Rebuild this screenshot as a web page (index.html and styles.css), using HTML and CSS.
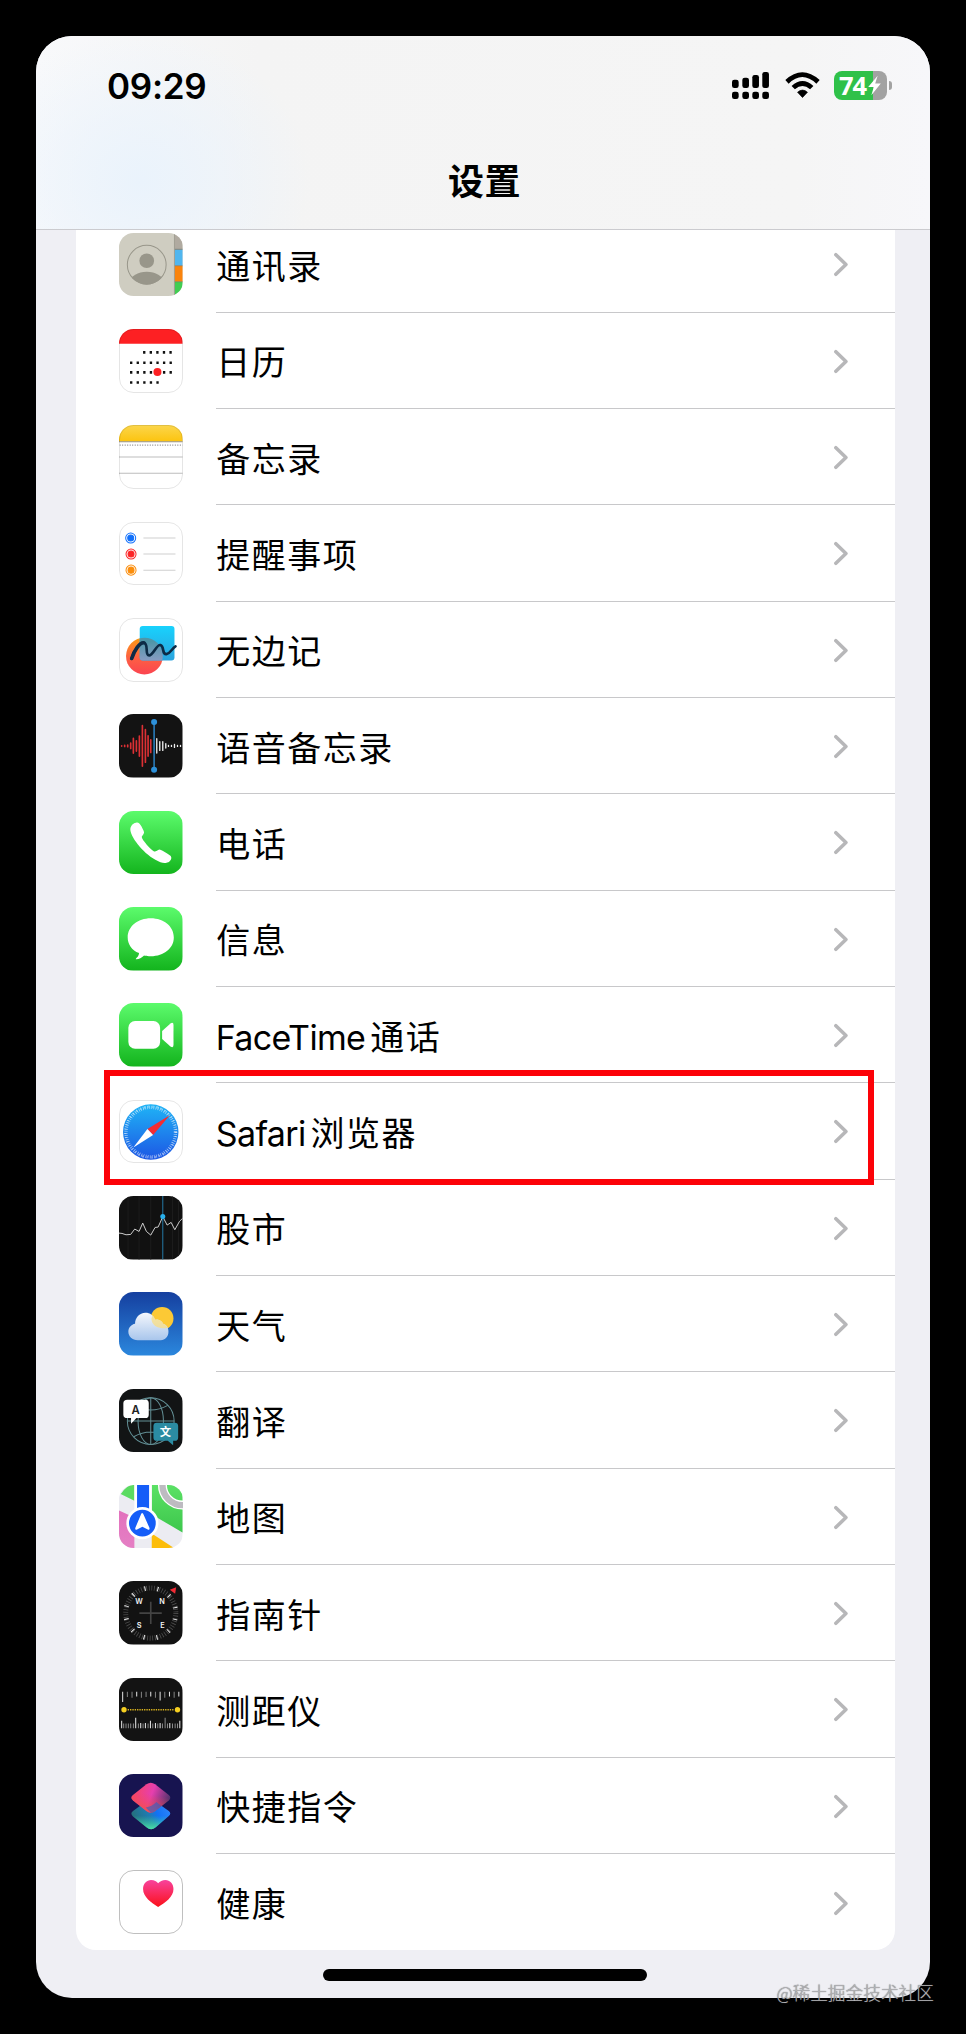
FILE: index.html
```html
<!DOCTYPE html>
<html lang="zh-CN">
<head>
<meta charset="utf-8">
<title>设置</title>
<link rel="stylesheet" href="styles.css">
</head>
<body>
<svg class="defs" width="0" height="0" aria-hidden="true">
  <defs>
    <linearGradient id="green" x1="0" y1="0" x2="0" y2="1"><stop offset="0" stop-color="#5cfb6c"/><stop offset="1" stop-color="#13b41d"/></linearGradient>
    <linearGradient id="yellow" x1="0" y1="0" x2="0" y2="1"><stop offset="0" stop-color="#fbd64d"/><stop offset="1" stop-color="#fcc40f"/></linearGradient>
    <linearGradient id="cyan" x1="0" y1="0" x2="0" y2="1"><stop offset="0" stop-color="#18d2fd"/><stop offset="1" stop-color="#2ba4de"/></linearGradient>
    <linearGradient id="coral" x1="0" y1="0" x2="0" y2="1"><stop offset="0" stop-color="#fb9b14"/><stop offset=".55" stop-color="#fd6043"/><stop offset="1" stop-color="#fb4450"/></linearGradient>
    <linearGradient id="overlap" x1="0" y1="0" x2="0" y2="1"><stop offset=".1" stop-color="#4f96a8"/><stop offset=".65" stop-color="#8a9cc4"/></linearGradient>
    <linearGradient id="safari" x1="0" y1="0" x2="0" y2="1"><stop offset="0" stop-color="#1fb4f6"/><stop offset="1" stop-color="#1d56e4"/></linearGradient>
    <linearGradient id="sky" x1="0" y1="0" x2="0" y2="1"><stop offset="0" stop-color="#153f9f"/><stop offset="1" stop-color="#2b87dd"/></linearGradient>
    <linearGradient id="cloud" x1="0" y1="0" x2="0" y2="1"><stop offset="0" stop-color="#f4f7fc"/><stop offset="1" stop-color="#a9c6ec"/></linearGradient>
    <linearGradient id="heart" x1="0" y1="0" x2="0" y2="1"><stop offset="0" stop-color="#f8429c"/><stop offset="1" stop-color="#fb1019"/></linearGradient>
    <linearGradient id="scTop" x1="0" y1=".3" x2="1" y2=".6"><stop offset="0" stop-color="#fa4560"/><stop offset=".5" stop-color="#e63fae"/><stop offset="1" stop-color="#4a3268"/></linearGradient>
    <linearGradient id="scShade" x1=".7" y1="0" x2=".4" y2="1"><stop offset=".4" stop-color="#f24a50" stop-opacity="0"/><stop offset="1" stop-color="#f65048"/></linearGradient>
    <linearGradient id="scLow" x1="0" y1=".6" x2="1" y2=".3"><stop offset="0" stop-color="#256f78"/><stop offset=".45" stop-color="#1f7cb4"/><stop offset=".65" stop-color="#1272f5"/><stop offset="1" stop-color="#2d85fb"/></linearGradient>
    <linearGradient id="scGlow" x1=".5" y1="0" x2=".5" y2="1"><stop offset=".55" stop-color="#3ad0a0" stop-opacity="0"/><stop offset="1" stop-color="#4be0a4"/></linearGradient>
    <linearGradient id="pink" x1="0" y1="0" x2="0" y2="1"><stop offset="0" stop-color="#e271bd"/><stop offset="1" stop-color="#e57fc4"/></linearGradient>
    <linearGradient id="mapGreen" x1="0" y1="0" x2="0" y2="1"><stop offset="0" stop-color="#5be165"/><stop offset="1" stop-color="#3dc74c"/></linearGradient>
    <symbol id="chevron" viewBox="0 0 15 25"><path d="M2 2 12.8 12.5 2 23" fill="none" stroke="#b7b7b9" stroke-width="3.8" stroke-linecap="round" stroke-linejoin="round"/></symbol>
  </defs>
</svg>

<div class="phone">
  <header class="header">
    <div class="status">
      <span class="time">09:29</span>
      <div class="indicators">
        <svg class="signal" viewBox="0 0 112 82">
          <rect x="0" y="23" width="20" height="25" rx="7"/><rect x="31" y="17" width="20" height="31" rx="7"/><rect x="61" y="9" width="20" height="39" rx="7"/><rect x="91" y="0" width="20" height="48" rx="7"/>
          <rect x="0" y="59" width="20" height="22" rx="7"/><rect x="31" y="59" width="20" height="22" rx="7"/><rect x="61" y="59" width="20" height="22" rx="7"/><rect x="91" y="59" width="20" height="22" rx="7"/>
        </svg>
        <svg class="wifi" viewBox="0 0 106 80">
          <path d="M1 24Q52-23 105 24L95 35Q52-5 11 35Z"/><path d="M20 42Q53 12 86 42L76 52Q53 32 30 52Z"/><path d="M38 61Q53 48 68 61L53 77Z" stroke="#000" stroke-width="2" stroke-linejoin="round"/>
        </svg>
        <div class="battery">
          <span class="charge">74</span>
          <svg class="bolt" viewBox="0 0 36 60"><path d="M27 2 0 34H16L9 58 36 24H20Z"/></svg>
        </div>
        <i class="nub"></i>
      </div>
    </div>
    <h1 class="title">设置</h1>
  </header>

  <main class="content">
    <ul class="list">
      <li class="row">
        <svg class="icon" viewBox="0 0 190 190"><rect width="190" height="190" fill="#cfcdc1"/><path d="M167 0h23v49h-23z" fill="#b0aaa0"/><path d="M167 49h23v49h-23z" fill="#51b6ef"/><path d="M167 98h23v48h-23z" fill="#fb840e"/><path d="M167 146h23v44h-23z" fill="#41cd52"/><path d="M167 49h23M167 98h23M167 146h23" stroke="#75736a" stroke-width="3" opacity=".6"/><path d="M166 0v190" stroke="#8d8b80" stroke-width="2"/><clipPath id="face"><circle cx="83" cy="95" r="59"/></clipPath><circle cx="83" cy="83" r="22" fill="#98968a"/><ellipse cx="83" cy="146" rx="49" ry="30" fill="#98968a" clip-path="url(#face)"/><circle cx="83" cy="95" r="58" fill="none" stroke="#98968a" stroke-width="3"/></svg>
        <div class="cell"><span class="label">通讯录</span><svg class="chevron"><use href="#chevron"/></svg></div>
      </li>
      <li class="row">
        <svg class="icon outlined" viewBox="0 0 190 190"><rect width="190" height="190" fill="#fff"/><path d="M0 0h190v44H0z" fill="#fd2023"/><g stroke="#111" stroke-width="8" fill="none"><path d="M72 70h90" stroke-dasharray="7 12.7"/><path d="M33 101h128" stroke-dasharray="7 12.7"/><path d="M33 130h128" stroke-dasharray="7 12.7"/><path d="M33 160h89" stroke-dasharray="7 12.7"/></g><circle cx="115" cy="129" r="12" fill="#fd2023"/></svg>
        <div class="cell"><span class="label">日历</span><svg class="chevron"><use href="#chevron"/></svg></div>
      </li>
      <li class="row">
        <svg class="icon outlined" viewBox="0 0 190 190"><rect width="190" height="190" fill="#fff"/><path d="M0 0h190v49H0z" fill="url(#yellow)"/><path d="M0 50h190" stroke="#96917f" stroke-width="3"/><path d="M2 60h188" stroke="#888" stroke-width="4" stroke-dasharray="3 4.5"/><path d="M0 96h190M0 144h190" stroke="#bdbdbd" stroke-width="3"/></svg>
        <div class="cell"><span class="label">备忘录</span><svg class="chevron"><use href="#chevron"/></svg></div>
      </li>
      <li class="row">
        <svg class="icon outlined" viewBox="0 0 190 190"><rect width="190" height="190" fill="#fff"/><g stroke-width="3"><g fill="#1170fb" stroke="#1170fb"><circle cx="35" cy="48" r="9"/><circle cx="35" cy="48" r="15" fill="none"/></g><g fill="#fb2527" stroke="#fb2527"><circle cx="36" cy="96" r="9"/><circle cx="36" cy="96" r="15" fill="none"/></g><g fill="#fb8d0b" stroke="#fb8d0b"><circle cx="36" cy="144" r="9"/><circle cx="36" cy="144" r="15" fill="none"/></g></g><path d="M73 48h96M73 96h96M73 144h96" stroke="#cfcfcf" stroke-width="3"/></svg>
        <div class="cell"><span class="label">提醒事项</span><svg class="chevron"><use href="#chevron"/></svg></div>
      </li>
      <li class="row">
        <svg class="icon outlined" viewBox="0 0 190 190"><rect width="190" height="190" fill="#fff"/><circle cx="76" cy="114" r="55" fill="url(#coral)"/><rect x="62" y="24" width="104" height="103" rx="9" fill="url(#cyan)"/><clipPath id="card"><rect x="62" y="24" width="104" height="103" rx="9"/></clipPath><circle cx="76" cy="114" r="55" fill="url(#overlap)" clip-path="url(#card)"/><path d="M38 121C46 96 62 73 74 74 90 75 76 112 90 112 103 112 112 78 124 81 137 85 127 110 142 108 155 106 158 91 169 85" fill="none" stroke="#0d2b46" stroke-width="8" stroke-linecap="round"/><path d="M38 121C46 96 62 73 74 74" fill="none" stroke="#0d2b46" stroke-width="11" stroke-linecap="round"/></svg>
        <div class="cell"><span class="label">无边记</span><svg class="chevron"><use href="#chevron"/></svg></div>
      </li>
      <li class="row">
        <svg class="icon" viewBox="0 0 190 190"><rect width="190" height="190" fill="#131313"/><g stroke="#dc3034" stroke-width="5" stroke-linecap="round"><path d="M8 95v1M17 94v3M26 93v5M35 87v16M43 73v44M52 80v31M61 66v60M70 35v121M79 47v97M87 65v61M95 77v38"/></g><g stroke="#eee" stroke-width="4" stroke-linecap="round"><path d="M113 74v43M122 83v26M131 83v26M140 89v13M148 94v3M157 94v3M166 91v9M175 94v3M184 94v3"/></g><path d="M105 24v143" stroke="#2d91da" stroke-width="4"/><circle cx="105" cy="24" r="9" fill="#2d91da"/><circle cx="105" cy="167" r="9" fill="#2d91da"/></svg>
        <div class="cell"><span class="label">语音备忘录</span><svg class="chevron"><use href="#chevron"/></svg></div>
      </li>
      <li class="row">
        <svg class="icon" viewBox="0 0 190 190"><rect width="190" height="190" fill="url(#green)"/><path d="M51 35C58 33 62 38 67 46L74 60C77 67 72 71 68 77 68 86 96 117 105 121 110 123 115 116 121 115 126 115 147 128 154 134 159 139 156 147 151 151 144 156 134 157 124 153 84 138 43 91 35 62 31 47 40 37 51 35Z" fill="#fff"/></svg>
        <div class="cell"><span class="label">电话</span><svg class="chevron"><use href="#chevron"/></svg></div>
      </li>
      <li class="row">
        <svg class="icon" viewBox="0 0 190 190"><rect width="190" height="190" fill="url(#green)"/><path d="M95 34C135 34 164 59 164 91S135 147 95 147C88 147 81 147 75 145 68 152 60 156 52 156 48 156 52 153 57 147 59 144 60 141 60 138 38 129 26 111 26 91 26 59 56 34 95 34Z" fill="#fff"/></svg>
        <div class="cell"><span class="label">信息</span><svg class="chevron"><use href="#chevron"/></svg></div>
      </li>
      <li class="row">
        <svg class="icon" viewBox="0 0 190 190"><rect width="190" height="190" fill="url(#green)"/><rect x="28" y="54" width="95" height="83" rx="20" fill="#fff"/><path d="M129 84 154 61Q163 55 163 66V126Q163 136 154 130L129 108Z" fill="#fff"/></svg>
        <div class="cell"><span class="label"><span class="latin">FaceTime</span>通话</span><svg class="chevron"><use href="#chevron"/></svg></div>
      </li>
      <li class="row">
        <svg class="icon outlined" viewBox="0 0 190 190"><rect width="190" height="190" fill="#fff"/><circle cx="95" cy="96" r="83" fill="url(#safari)"/><circle cx="95" cy="96" r="74" fill="none" stroke="#fff" stroke-width="10" stroke-dasharray="2 4.46" opacity=".65"/><circle cx="95" cy="96" r="76" fill="none" stroke="#fff" stroke-width="7" stroke-dasharray="2 10.92" opacity=".6"/><path d="M152 46 85 87 102 105Z" fill="#f42c32"/><path d="M43 142 85 87 102 105Z" fill="#fff"/></svg>
        <div class="cell"><span class="label"><span class="latin">Safari</span>浏览器</span><svg class="chevron"><use href="#chevron"/></svg></div>
        <div class="highlight"></div>
      </li>
      <li class="row">
        <svg class="icon" viewBox="0 0 190 190"><rect width="190" height="190" fill="#111"/><path d="M27 0v190M60 0v190M95 0v190M160 0v190M178 0v190" stroke="#1c1c1c" stroke-width="3"/><path d="M0 111 9 112 21 116 35 115 47 99 60 106 71 81 82 106 95 117 108 94 117 93 131 62 144 87 156 79 167 101 181 76 190 67" fill="none" stroke="#d8d8d8" stroke-width="2.8"/><path d="M131 0v190" stroke="#2479a6" stroke-width="3"/><circle cx="131" cy="61" r="7.5" fill="#28b0ec"/></svg>
        <div class="cell"><span class="label">股市</span><svg class="chevron"><use href="#chevron"/></svg></div>
      </li>
      <li class="row">
        <svg class="icon" viewBox="0 0 190 190"><rect width="190" height="190" fill="url(#sky)"/><circle cx="129" cy="79" r="34" fill="#fcc935"/><path d="M56 144C40 144 28 133 28 119 28 106 37 97 48 95 48 77 61 62 79 62 93 62 104 70 108 83 119 80 130 88 133 96 143 98 148 108 148 119 148 134 138 144 125 144Z" fill="url(#cloud)"/><path d="M100 70C106 76 107 80 108 83 119 80 130 88 133 96 138 98 142 101 144 107 120 113 98 101 97 80Z" fill="#f8dd83" opacity=".75"/></svg>
        <div class="cell"><span class="label">天气</span><svg class="chevron"><use href="#chevron"/></svg></div>
      </li>
      <li class="row">
        <svg class="icon" viewBox="0 0 190 190"><rect width="190" height="190" fill="#121415"/><g fill="none" stroke="#639096" stroke-width="3"><circle cx="95" cy="96" r="70"/><ellipse cx="95" cy="96" rx="38" ry="70"/><path d="M95 26v140M25 96h140M44 49Q95 77 146 49M44 143Q95 115 146 143" /></g><path d="M25 32H79Q89 32 89 42V77Q89 87 79 87H52L36 104V87H25Q13 87 13 77V43Q13 32 25 32Z" fill="#fff"/><path d="M113 101H167Q177 101 177 111V145Q177 155 167 155H162V168L146 155H113Q103 155 103 145V111Q103 101 113 101Z" fill="#2b8ba2"/><text x="50" y="74" class="glyph-a">A</text><text x="139" y="140" class="glyph-wen">文</text></svg>
        <div class="cell"><span class="label">翻译</span><svg class="chevron"><use href="#chevron"/></svg></div>
      </li>
      <li class="row">
        <svg class="icon" viewBox="0 0 190 190"><rect width="190" height="190" fill="#ececf2"/><path d="M8 24Q24 0 42 0H46V47L5 27Z" fill="#5bdb61"/><path d="M98 0H190V142L98 88Z" fill="url(#mapGreen)"/><path d="M0 76 46 97V190H0Z" fill="url(#pink)"/><path d="M98 145 167 190H98Z" fill="#fcbd0b"/><circle cx="190" cy="0" r="60" fill="none" stroke="#fff" stroke-width="27"/><circle cx="190" cy="0" r="60" fill="none" stroke="#bdbbc1" stroke-width="19"/><path d="M46 0H98V93H46Z" fill="#fff"/><path d="M54 0H90V90H54Z" fill="#155df8"/><circle cx="70" cy="114" r="48" fill="#fff"/><circle cx="70" cy="114" r="40" fill="#155df8"/><path d="M69 84Q72 84 74 90L91 128Q93 136 86 133L70 125 54 133Q47 136 49 128L65 90Q67 84 69 84Z" fill="#fff"/></svg>
        <div class="cell"><span class="label">地图</span><svg class="chevron"><use href="#chevron"/></svg></div>
      </li>
      <li class="row">
        <svg class="icon" viewBox="0 0 190 190"><rect width="190" height="190" fill="#121212"/><circle cx="95" cy="96" r="75" fill="none" stroke="#4c4c4c" stroke-width="15" stroke-dasharray="2.5 5.35"/><circle cx="95" cy="96" r="75" fill="none" stroke="#e8e8e8" stroke-width="14" stroke-dasharray="3 36.27" stroke-dashoffset="-18"/><path d="M95 62v67M61 96h67" stroke="#444" stroke-width="5"/><path d="M152 26 171 19 168 38Z" fill="#f12b34"/><g class="compass-letters"><text x="60" y="68">W</text><text x="129" y="68">N</text><text x="60" y="140">S</text><text x="130" y="140">E</text></g></svg>
        <div class="cell"><span class="label">指南针</span><svg class="chevron"><use href="#chevron"/></svg></div>
      </li>
      <li class="row">
        <svg class="icon" viewBox="0 0 190 190"><rect width="190" height="190" fill="#131313"/><g fill="none" stroke-width="3"><path d="M11 41v31M53 41v14M95 41v14M123 41v26M151 41v14M179 41v14" stroke="#e8e8e8"/><path d="M25 41v16M39 41v18M67 41v18M81 41v16M109 41v18M137 41v18M165 41v18" stroke="#858585"/><path d="M8 128v22M50 119v31M65 135v15M79 135v15M94 128v22M109 135v15M123 135v15M152 135v15M182 128v22" stroke="#ededed"/><path d="M14 136v14M21 136v14M28 136v14M35 136v14M43 136v14M58 136v14M72 136v14M87 136v14M101 136v14M116 136v14M130 136v14M138 119v31M145 136v14M160 136v14M168 136v14M175 136v14" stroke="#8b8b8b"/><path d="M26 95h140" stroke="#dcb41e" stroke-width="5" stroke-dasharray="4 3"/></g><circle cx="15" cy="95" r="8" fill="#f6cf21"/><circle cx="175" cy="95" r="8" fill="#f6cf21"/></svg>
        <div class="cell"><span class="label">测距仪</span><svg class="chevron"><use href="#chevron"/></svg></div>
      </li>
      <li class="row">
        <svg class="icon" viewBox="0 0 190 190"><rect width="190" height="190" fill="#171450"/><path d="M84 80Q95 72 106 80L149 111Q158 118 149 126L110 159Q96 171 82 159L42 127Q32 118 42 111Z" fill="url(#scLow)"/><path d="M84 80Q95 72 106 80L149 111Q158 118 149 126L110 159Q96 171 82 159L42 127Q32 118 42 111Z" fill="url(#scGlow)"/><path d="M82 31Q95 21 108 31L149 63Q158 71 149 79L108 111Q95 121 82 111L42 79Q32 71 42 63Z" fill="url(#scTop)"/><path d="M82 31Q95 21 108 31L149 63Q158 71 149 79L108 111Q95 121 82 111L42 79Q32 71 42 63Z" fill="url(#scShade)"/><path d="M127 96 108 111Q102 115 96 117L80 100Q98 98 112 84Z" fill="#2a62c8" opacity=".6"/></svg>
        <div class="cell"><span class="label">快捷指令</span><svg class="chevron"><use href="#chevron"/></svg></div>
      </li>
      <li class="row last">
        <svg class="icon outlined strong" viewBox="0 0 190 190"><rect width="190" height="190" fill="#fff"/><path d="M117 111C97 98 72 81 72 57 72 41 83 30 96 30 106 30 113 35 117 40 122 35 130 30 139 30 152 30 163 41 163 57 163 81 138 98 117 111Z" fill="url(#heart)"/></svg>
        <div class="cell"><span class="label">健康</span><svg class="chevron"><use href="#chevron"/></svg></div>
      </li>
    </ul>
    <div class="home-indicator"></div>
  </main>
</div>
<div class="watermark">@稀土掘金技术社区</div>
</body>
</html>
```

FILE: styles.css
```css
* { box-sizing: border-box; }

body {
  margin: 0;
  height: 2034px;
  padding: 36px;
  background: #000;
  color: #000;
  font-family: Inter, "Noto Sans CJK SC", sans-serif;
  overflow: hidden;
  position: relative;
}

.defs { position: absolute; }

.phone {
  width: 894px;
  height: 1962px;
  border-radius: 36px;
  overflow: hidden;
  background: #efeff4;
  display: flex;
  flex-direction: column;
}

.header {
  flex: none;
  height: 194px;
  position: relative;
  z-index: 1;
  border-bottom: 1px solid #cbcbcf;
  background:
    radial-gradient(ellipse 170px 150px at 105px 145px, #eaf3fc 0, rgba(234, 243, 252, .6) 45%, rgba(234, 243, 252, 0) 100%),
    linear-gradient(90deg, #f8f9fb 0, #f4f4f4 25%, #f5f5f5 85%, #f7f7fa 100%);
}

.status {
  height: 99px;
  padding: 0 38px 0 71px;
  display: flex;
  align-items: center;
  justify-content: space-between;
}

.time {
  font-size: 35px;
  font-weight: 600;
  line-height: 40px;
  letter-spacing: -0.3px;
}

.indicators { display: flex; align-items: center; }
.signal { width: 37.3px; height: 27.3px; margin-right: 16px; }
.wifi { width: 35px; height: 26.6px; margin-right: 14px; }

.battery {
  width: 53px;
  height: 29px;
  border-radius: 8px;
  background: linear-gradient(90deg, #2fc149 39px, #a2a2a2 39px);
  display: flex;
  align-items: center;
  padding-left: 5px;
}

.charge {
  color: #fff;
  font-family: "Noto Sans", sans-serif;
  font-size: 25.5px;
  font-weight: 700;
  line-height: 29px;
  letter-spacing: -1px;
}

.bolt { width: 13px; height: 21px; fill: #fff; margin-left: 2px; }

.nub {
  width: 3px;
  height: 9px;
  margin-left: 2px;
  border-radius: 0 3px 3px 0;
  background: #a2a2a2;
}

.title {
  margin: 22px 0 0 3px;
  text-align: center;
  font-size: 36px;
  line-height: 50px;
  font-weight: 700;
  letter-spacing: .6px;
}

.content {
  flex: 1;
  display: flex;
  flex-direction: column;
  padding: 0 35px 0 40px;
}

.list {
  list-style: none;
  margin: -13.7px 0 0;
  padding: 0;
  background: #fff;
  border-radius: 0 0 20px 20px;
}

.row {
  height: 96.34px;
  padding-left: 43.2px;
  display: flex;
  align-items: center;
  gap: 33.3px;
  position: relative;
}

.icon {
  flex: none;
  width: 63.5px;
  height: 63.5px;
  border-radius: 14.5px;
}

.outlined { outline: 1px solid rgba(0, 0, 0, .1); outline-offset: -1px; }
.strong { outline-color: rgba(0, 0, 0, .25); }

.cell {
  flex: 1;
  align-self: stretch;
  display: flex;
  align-items: center;
  justify-content: space-between;
  padding-right: 47px;
  border-bottom: 1px solid #c8c8ca;
}

.last .cell { border-bottom: 0; }

.label {
  font-size: 34px;
  line-height: 50px;
  letter-spacing: 1.5px;
  padding: 6px 0 0 .3px;
}

.latin { letter-spacing: -0.65px; margin: 0 5px 0 -0.5px; }
.chevron { width: 14px; height: 25px; margin-top: 2px; }

.highlight {
  position: absolute;
  left: 28px;
  top: -13px;
  width: 770px;
  height: 115px;
  border: 6px solid #fc0208;
  z-index: 1;
}

.home-indicator {
  width: 324px;
  height: 12px;
  margin: 18.5px 0 0 247px;
  border-radius: 6px;
  background: #000;
}

.watermark {
  position: absolute;
  right: 32px;
  top: 1979px;
  font-size: 17.7px;
  font-weight: 300;
  line-height: 26px;
  font-family: "Noto Sans CJK SC", sans-serif;
  color: #b4b4b8;
  text-shadow: 0 0 1px #555;
}

.glyph-a { font: 600 34px Inter, sans-serif; text-anchor: middle; fill: #222; }
.glyph-wen { font: 700 34px "Noto Sans CJK SC", sans-serif; text-anchor: middle; fill: #fff; }
.compass-letters { font: 600 22px Inter, sans-serif; text-anchor: middle; fill: #f4f4f4; }
```
